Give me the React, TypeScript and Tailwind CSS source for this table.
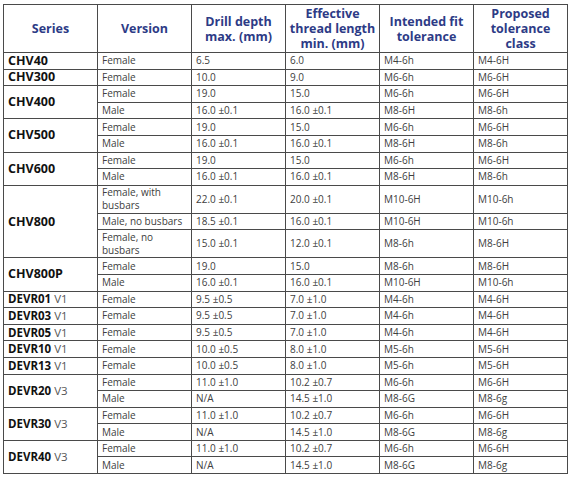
type Row = {
  version: string;
  drill: string;
  thread: string;
  fit: string;
  cls: string;
  tall?: boolean;
};

type Group = { series: string; suffix?: string; rows: Row[] };

const groups: Group[] = [
  { series: "CHV40", rows: [{ version: "Female", drill: "6.5", thread: "6.0", fit: "M4-6h", cls: "M4-6H" }] },
  { series: "CHV300", rows: [{ version: "Female", drill: "10.0", thread: "9.0", fit: "M6-6h", cls: "M6-6H" }] },
  {
    series: "CHV400",
    rows: [
      { version: "Female", drill: "19.0", thread: "15.0", fit: "M6-6h", cls: "M6-6H" },
      { version: "Male", drill: "16.0 ±0.1", thread: "16.0 ±0.1", fit: "M8-6H", cls: "M8-6h" },
    ],
  },
  {
    series: "CHV500",
    rows: [
      { version: "Female", drill: "19.0", thread: "15.0", fit: "M6-6h", cls: "M6-6H" },
      { version: "Male", drill: "16.0 ±0.1", thread: "16.0 ±0.1", fit: "M8-6H", cls: "M8-6h" },
    ],
  },
  {
    series: "CHV600",
    rows: [
      { version: "Female", drill: "19.0", thread: "15.0", fit: "M6-6h", cls: "M6-6H" },
      { version: "Male", drill: "16.0 ±0.1", thread: "16.0 ±0.1", fit: "M8-6H", cls: "M8-6h" },
    ],
  },
  {
    series: "CHV800",
    rows: [
      { version: "Female, with busbars", drill: "22.0 ±0.1", thread: "20.0 ±0.1", fit: "M10-6H", cls: "M10-6h", tall: true },
      { version: "Male, no busbars", drill: "18.5 ±0.1", thread: "16.0 ±0.1", fit: "M10-6H", cls: "M10-6h" },
      { version: "Female, no busbars", drill: "15.0 ±0.1", thread: "12.0 ±0.1", fit: "M8-6h", cls: "M8-6H", tall: true },
    ],
  },
  {
    series: "CHV800P",
    rows: [
      { version: "Female", drill: "19.0", thread: "15.0", fit: "M8-6h", cls: "M8-6H" },
      { version: "Male", drill: "16.0 ±0.1", thread: "16.0 ±0.1", fit: "M10-6H", cls: "M10-6h" },
    ],
  },
  { series: "DEVR01", suffix: "V1", rows: [{ version: "Female", drill: "9.5 ±0.5", thread: "7.0 ±1.0", fit: "M4-6h", cls: "M4-6H" }] },
  { series: "DEVR03", suffix: "V1", rows: [{ version: "Female", drill: "9.5 ±0.5", thread: "7.0 ±1.0", fit: "M4-6h", cls: "M4-6H" }] },
  { series: "DEVR05", suffix: "V1", rows: [{ version: "Female", drill: "9.5 ±0.5", thread: "7.0 ±1.0", fit: "M4-6h", cls: "M4-6H" }] },
  { series: "DEVR10", suffix: "V1", rows: [{ version: "Female", drill: "10.0 ±0.5", thread: "8.0 ±1.0", fit: "M5-6h", cls: "M5-6H" }] },
  { series: "DEVR13", suffix: "V1", rows: [{ version: "Female", drill: "10.0 ±0.5", thread: "8.0 ±1.0", fit: "M5-6h", cls: "M5-6H" }] },
  {
    series: "DEVR20",
    suffix: "V3",
    rows: [
      { version: "Female", drill: "11.0 ±1.0", thread: "10.2 ±0.7", fit: "M6-6h", cls: "M6-6H" },
      { version: "Male", drill: "N/A", thread: "14.5 ±1.0", fit: "M8-6G", cls: "M8-6g" },
    ],
  },
  {
    series: "DEVR30",
    suffix: "V3",
    rows: [
      { version: "Female", drill: "11.0 ±1.0", thread: "10.2 ±0.7", fit: "M6-6h", cls: "M6-6H" },
      { version: "Male", drill: "N/A", thread: "14.5 ±1.0", fit: "M8-6G", cls: "M8-6g" },
    ],
  },
  {
    series: "DEVR40",
    suffix: "V3",
    rows: [
      { version: "Female", drill: "11.0 ±1.0", thread: "10.2 ±0.7", fit: "M6-6h", cls: "M6-6H" },
      { version: "Male", drill: "N/A", thread: "14.5 ±1.0", fit: "M8-6G", cls: "M8-6g" },
    ],
  },
];

const headers = [
  ["Series"],
  ["Version"],
  ["Drill depth", "max. (mm)"],
  ["Effective", "thread length", "min. (mm)"],
  ["Intended fit", "tolerance"],
  ["Proposed", "tolerance", "class"],
];

const cell = "border border-[#4a4a4a] px-[4px] py-0 text-left align-middle";

export default function App() {
  return (
    <div className="bg-white w-[569px] h-[478px] pt-[4px] pl-[3px] font-['Open_Sans',sans-serif]">
      <table className="w-[563px] table-fixed border-collapse border-[1.5px] border-[#3a3a3a]">
        <thead>
          <tr className="h-[48px]">
            {headers.map((lines, i) => (
              <th
                key={i}
                className="w-[94px] border border-[#4a4a4a] px-[2px] text-center align-middle text-[12.5px] font-bold leading-[15px] text-[#2d3b86]"
              >
                {lines.map((l) => (
                  <div key={l} className="whitespace-nowrap">
                    {l}
                  </div>
                ))}
              </th>
            ))}
          </tr>
        </thead>
        <tbody className="text-[10px] leading-[13px] text-[#404040]">
          {groups.map((g) =>
            g.rows.map((r, j) => (
              <tr key={g.series + j} className={r.tall ? "h-[28px]" : "h-[16.6px]"}>
                {j === 0 && (
                  <td
                    rowSpan={g.rows.length}
                    className={`${cell} text-[#111] ${g.suffix ? "text-[11.5px] leading-[14px]" : "text-[12.5px] leading-[14px]"}`}
                  >
                    <span className="font-bold">{g.series}</span>
                    {g.suffix && <span className="text-[#555]"> {g.suffix}</span>}
                  </td>
                )}
                <td className={cell}>{r.version}</td>
                <td className={cell}>{r.drill}</td>
                <td className={cell}>{r.thread}</td>
                <td className={cell}>{r.fit}</td>
                <td className={cell}>{r.cls}</td>
              </tr>
            )),
          )}
        </tbody>
      </table>
    </div>
  );
}
